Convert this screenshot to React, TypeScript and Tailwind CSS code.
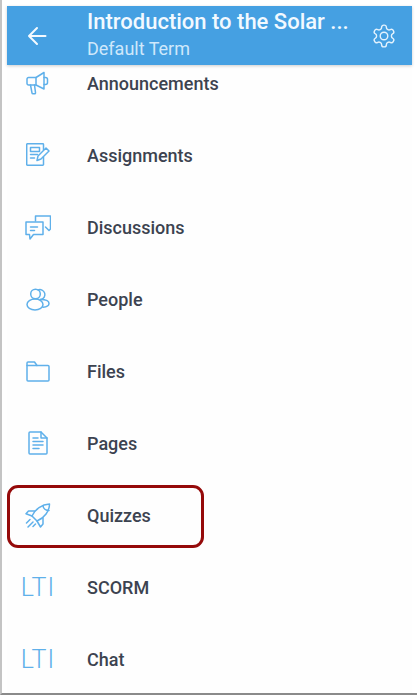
import React from "react";

const S = { fill: "none", stroke: "#5fb0ea", strokeWidth: 1.5, strokeLinecap: "round", strokeLinejoin: "round" } as const;

const Megaphone = () => (
  <svg width="24" height="24" viewBox="0 0 24 24" {...S}>
    <path d="M2.500 6.500H10L18 1.500V18L10 14H2.500a1.500 1.500 0 0 1-1.500-1.500V8a1.500 1.500 0 0 1 1.500-1.500z" />
    <path d="M10 6.500V14M18 6.500h1.500a2 2 0 0 1 2 2v3a2 2 0 0 1-2 2H18" />
    <path d="M4.500 14l1.500 8a1 1 0 0 0 1 .8h1.500a1 1 0 0 0 1-1.200L8.500 14" />
  </svg>
);
const Assignment = () => (
  <svg width="24" height="24" viewBox="0 0 24 24" {...S}>
    <path d="M17.500 7V1.500a.8.800 0 0 0-.8-.8H1.500a.8.800 0 0 0-.8.800v20a.8.800 0 0 0 .8.800h15.200a.8.800 0 0 0 .8-.8V14" />
    <path d="M4.500 4.500h9v4h-9zM4.500 11.500h7M4.500 15h4" />
    <path d="M11 17.500l1-4.500L20 5l3 3-8 8z" />
  </svg>
);
const Discussion = () => (
  <svg width="26" height="25" viewBox="0 0 26 25" {...S}>
    <path d="M10.500 6V1h15v13l-1.500 1.500-3.500-3.500" />
    <path d="M1 7h17v12.500H8.500L5 24l-.5-4.500H1z" />
    <path d="M5.500 12h7M5.500 15.500h4" />
  </svg>
);
const People = () => (
  <svg width="24" height="24" viewBox="0 0 24 24" {...S}>
    <circle cx="9.500" cy="7" r="4.800" />
    <path d="M12 3a5 5 0 1 1 3 9.500h-1" />
    <ellipse cx="9" cy="17.500" rx="8" ry="5.500" />
    <path d="M14.500 12.500c5 0 8.500 1.500 8.500 4 0 2.300-2.500 3.500-6 3.800" />
  </svg>
);
const Folder = () => (
  <svg width="24" height="21" viewBox="0 0 24 21" {...S}>
    <path d="M1 4V2a1 1 0 0 1 1-1h6.500l2.500 3.500h11a1 1 0 0 1 1 1V19a1 1 0 0 1-1 1H2a1 1 0 0 1-1-1z" />
    <path d="M1 4.500h10" />
  </svg>
);
const Page = () => (
  <svg width="20" height="24" viewBox="0 0 20 24" {...S}>
    <path d="M2 1h11l6 6v15a1 1 0 0 1-1 1H2a1 1 0 0 1-1-1V2a1 1 0 0 1 1-1z" />
    <path d="M13 1v6h6" />
    <path d="M5 7h5M5 10.500h10M5 14h10M5 17.500h6" />
  </svg>
);
const Rocket = () => (
  <svg width="26" height="25" viewBox="0 0 26 25" {...S}>
    <path d="M7 13C10 6 17 1.500 24.500 1c0 7-5 14-12.500 17z" />
    <path d="M18 2.800c.3 2.500 2.700 4.700 6 4.700" />
    <path d="M9.500 8H3.500L1 10.800 7 13" />
    <path d="M18 15v6l-2.500 3L12 18" />
    <path d="M5 16.500L1.500 20M8 19l-5 5M10.500 21L8 23.500" />
  </svg>
);
const Gear = () => (
  <svg width="26" height="26" viewBox="0 0 24 24" fill="none" stroke="#e3f2fd" strokeWidth="1.300" strokeLinecap="round" strokeLinejoin="round">
    <path d="M12.220 2h-.44a2 2 0 0 0-2 2v.18a2 2 0 0 1-1 1.730l-.43.250a2 2 0 0 1-2 0l-.15-.08a2 2 0 0 0-2.730.730l-.22.380a2 2 0 0 0 .730 2.730l.15.100a2 2 0 0 1 1 1.720v.510a2 2 0 0 1-1 1.740l-.15.090a2 2 0 0 0-.730 2.730l.22.380a2 2 0 0 0 2.730.730l.15-.08a2 2 0 0 1 2 0l.43.250a2 2 0 0 1 1 1.730V20a2 2 0 0 0 2 2h.44a2 2 0 0 0 2-2v-.18a2 2 0 0 1 1-1.730l.43-.250a2 2 0 0 1 2 0l.15.080a2 2 0 0 0 2.730-.730l.22-.390a2 2 0 0 0-.730-2.730l-.15-.080a2 2 0 0 1-1-1.740v-.500a2 2 0 0 1 1-1.740l.15-.090a2 2 0 0 0 .730-2.730l-.22-.380a2 2 0 0 0-2.730-.730l-.15.080a2 2 0 0 1-2 0l-.43-.250a2 2 0 0 1-1-1.730V4a2 2 0 0 0-2-2z" />
    <circle cx="12" cy="12" r="3.500" />
  </svg>
);
const Lti = () => (
  <span className="text-[25px] leading-none font-light tracking-[1px] text-[#5fb0ea] font-['Roboto',sans-serif]">LTI</span>
);

const items: [string, React.ReactNode][] = [
  ["Announcements", <Megaphone />],
  ["Assignments", <Assignment />],
  ["Discussions", <Discussion />],
  ["People", <People />],
  ["Files", <Folder />],
  ["Pages", <Page />],
  ["Quizzes", <Rocket />],
  ["SCORM", <Lti />],
  ["Chat", <Lti />],
];

export default function App() {
  return (
    <div className="relative h-[697px] w-[418px] overflow-hidden bg-white font-['Roboto',sans-serif]">
      <div className="flex h-[695px] w-[417px] flex-col overflow-hidden border-b-2 border-l-2 border-b-[#8a8a8a] border-l-[#c4c4c4] pr-[5px] pt-[6px] pl-[5px]">
        <header className="relative z-10 flex h-[59px] shrink-0 items-center bg-[#45a0e2] shadow-[0_1px_3px_rgba(0,0,0,0.2)]">
          <div className="flex w-[80px] shrink-0 justify-start pl-[20px]">
            <svg width="20" height="20" viewBox="0 0 20 20" fill="none" stroke="#f4faff" strokeWidth="2" strokeLinecap="round" strokeLinejoin="round">
              <path d="M18.500 10H2M10 2l-8 8 8 8" />
            </svg>
          </div>
          <div className="min-w-0 flex-1 -mt-[4px]">
            <div className="text-[22px] font-medium leading-[30px] whitespace-nowrap text-[#f2f9ff]">Introduction to the Solar ...</div>
            <div className="text-[18px] leading-[24px] text-[#cfe8fb]">Default Term</div>
          </div>
          <div className="flex w-[54px] shrink-0 justify-center pr-[2px]">
            <Gear />
          </div>
        </header>
        <ul className="-mt-[18px] flex flex-col bg-[#fefefe]">
          {items.map(([label, icon]) => (
            <li key={label} className="flex h-[72px] shrink-0 items-center">
              <div className="flex w-[80px] shrink-0 justify-center pr-[18px]">{icon}</div>
              <span className="text-[18px] font-medium text-[#3c4350]">{label}</span>
            </li>
          ))}
        </ul>
      </div>
      <div className="absolute left-[7px] top-[485px] h-[63px] w-[197px] rounded-[11px] border-[3px] border-[#950a0a]" />
    </div>
  );
}
